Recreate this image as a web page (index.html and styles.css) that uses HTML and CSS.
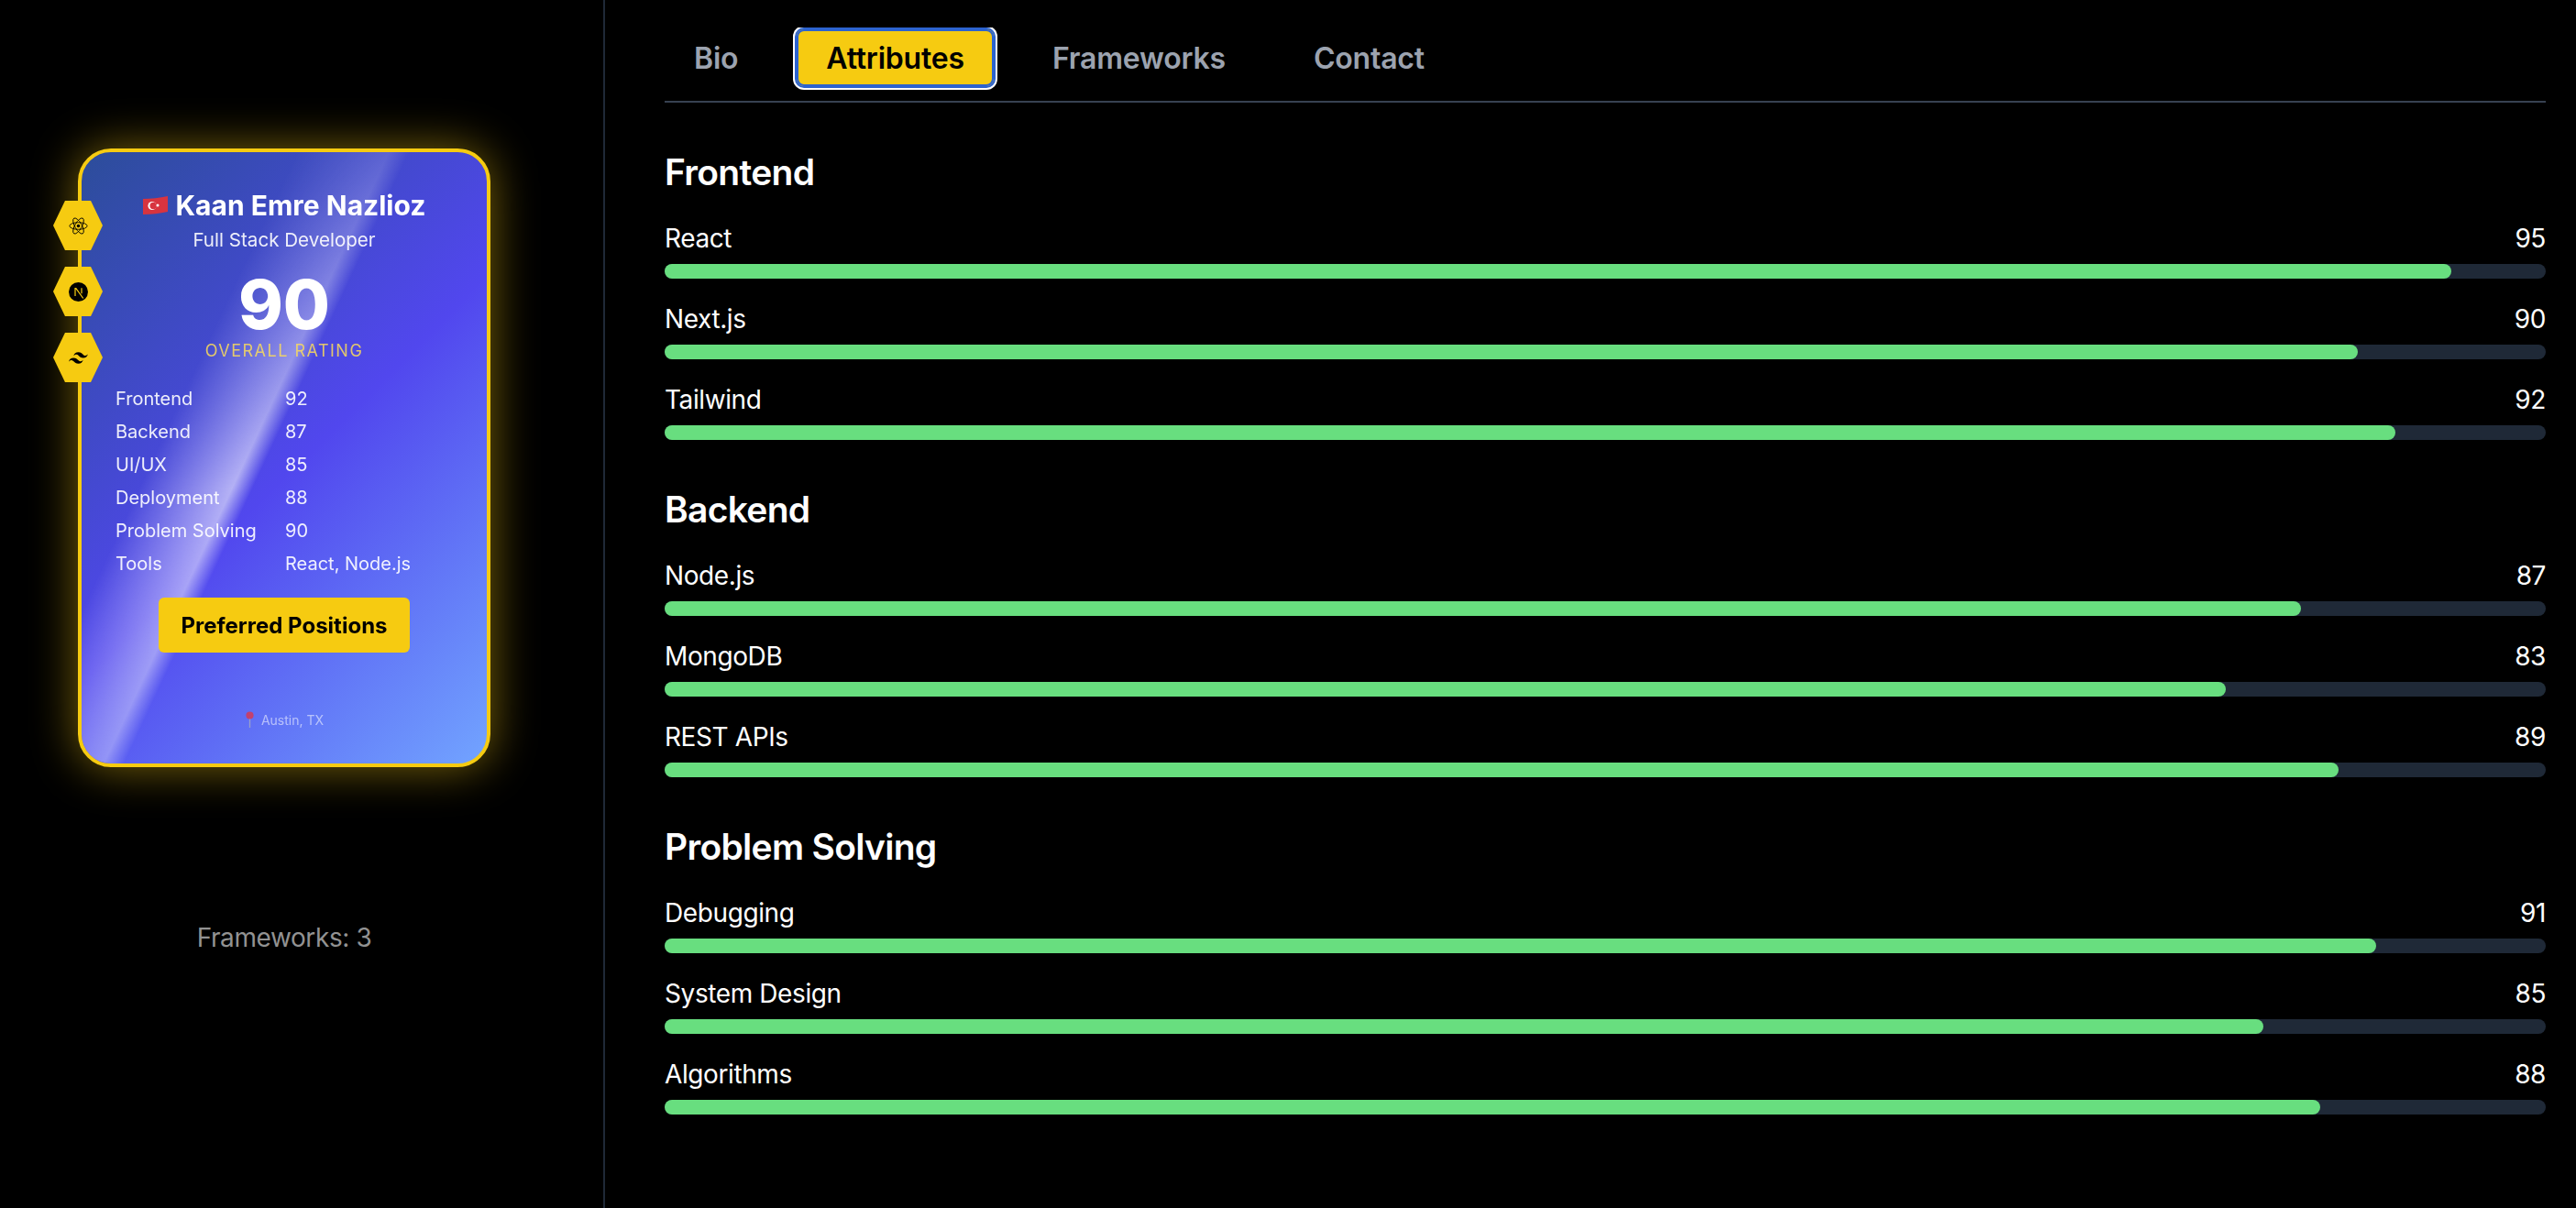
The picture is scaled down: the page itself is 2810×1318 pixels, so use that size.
FILE: index.html
```html
<!DOCTYPE html>
<html lang="en">
<head>
    <meta charset="UTF-8">
    <title>Kaan Emre Nazlioz</title>
    <link rel="stylesheet" href="styles.css">
</head>
<body>
    <div class="layout">
        <aside class="side">
            <div class="card">
                <div class="sheen"></div>
                <div class="badges">
                    <div class="hex">
                        <svg class="hex-icon" viewBox="-12 -12 24 24" fill="none" stroke="#000" stroke-width="1">
                            <circle r="2" fill="#000" stroke="none"></circle>
                            <ellipse rx="11" ry="4.3"></ellipse>
                            <ellipse rx="11" ry="4.3" transform="rotate(60)"></ellipse>
                            <ellipse rx="11" ry="4.3" transform="rotate(120)"></ellipse>
                        </svg>
                    </div>
                    <div class="hex">
                        <svg class="hex-icon" viewBox="0 0 24 24">
                            <circle cx="12" cy="12" r="12" fill="#000"></circle>
                            <path d="M8 17V7.5h1L18 20" fill="none" stroke="#f6cb11" stroke-width="1.4"></path>
                            <path d="M16 7v7" fill="none" stroke="#f6cb11" stroke-width="1.4"></path>
                        </svg>
                    </div>
                    <div class="hex">
                        <svg class="hex-icon" viewBox="0 0 24 24">
                            <path d="M12.001 4.8c-3.2 0-5.2 1.6-6 4.8 1.2-1.6 2.6-2.2 4.2-1.8.913.228 1.565.89 2.288 1.624C13.666 10.618 15.027 12 18.001 12c3.2 0 5.2-1.6 6-4.8-1.2 1.6-2.6 2.2-4.2 1.8-.913-.228-1.565-.89-2.288-1.624C16.337 6.182 14.976 4.8 12.001 4.8zm-6 7.2c-3.2 0-5.2 1.6-6 4.8 1.2-1.6 2.6-2.2 4.2-1.8.913.228 1.565.89 2.288 1.624 1.177 1.194 2.538 2.576 5.512 2.576 3.2 0 5.2-1.6 6-4.8-1.2 1.6-2.6 2.2-4.2 1.8-.913-.228-1.565-.89-2.288-1.624C10.337 13.382 8.976 12 6.001 12z"></path>
                        </svg>
                    </div>
                </div>
                <div class="card-body">
                    <div class="name">
                        <svg class="flag" viewBox="0 0 27 20">
                            <path d="M0 3C9 3 18 2 27 0v17c-9 2-18 3-27 3z" fill="#d8343f"></path>
                            <circle cx="10" cy="10.5" r="4.6" fill="#fff"></circle>
                            <circle cx="11.2" cy="10.5" r="3.7" fill="#d8343f"></circle>
                            <circle cx="16" cy="10" r="1.5" fill="#fff"></circle>
                        </svg>
                        <span>Kaan Emre Nazlioz</span>
                    </div>
                    <div class="role">Full Stack Developer</div>
                    <div class="rating">90</div>
                    <div class="rating-label">OVERALL RATING</div>
                    <div class="stats">
                        <span>Frontend</span><span>92</span>
                        <span>Backend</span><span>87</span>
                        <span>UI/UX</span><span>85</span>
                        <span>Deployment</span><span>88</span>
                        <span>Problem Solving</span><span>90</span>
                        <span>Tools</span><span>React, Node.js</span>
                    </div>
                    <button class="positions">Preferred Positions</button>
                    <div class="location">
                        <svg class="pin" viewBox="0 0 12 22">
                            <path d="M6 10v12" stroke="#9aa0c8" stroke-width="1.6"></path>
                            <circle cx="6" cy="5.5" r="5" fill="#c2416f"></circle>
                        </svg>
                        <span>Austin, TX</span>
                    </div>
                </div>
            </div>
            <div class="framework-count">Frameworks: 3</div>
        </aside>

        <main class="content">
            <nav class="tabs">
                <button class="tab">Bio</button>
                <button class="tab tab-active">Attributes</button>
                <button class="tab">Frameworks</button>
                <button class="tab">Contact</button>
            </nav>

            <section class="group">
                <h2>Frontend</h2>
                <div class="skill">
                    <div class="skill-row"><span>React</span><span>95</span></div>
                    <div class="track"><div class="fill" style="width: 95%"></div></div>
                </div>
                <div class="skill">
                    <div class="skill-row"><span>Next.js</span><span>90</span></div>
                    <div class="track"><div class="fill" style="width: 90%"></div></div>
                </div>
                <div class="skill">
                    <div class="skill-row"><span>Tailwind</span><span>92</span></div>
                    <div class="track"><div class="fill" style="width: 92%"></div></div>
                </div>
            </section>

            <section class="group">
                <h2>Backend</h2>
                <div class="skill">
                    <div class="skill-row"><span>Node.js</span><span>87</span></div>
                    <div class="track"><div class="fill" style="width: 87%"></div></div>
                </div>
                <div class="skill">
                    <div class="skill-row"><span>MongoDB</span><span>83</span></div>
                    <div class="track"><div class="fill" style="width: 83%"></div></div>
                </div>
                <div class="skill">
                    <div class="skill-row"><span>REST APIs</span><span>89</span></div>
                    <div class="track"><div class="fill" style="width: 89%"></div></div>
                </div>
            </section>

            <section class="group">
                <h2>Problem Solving</h2>
                <div class="skill">
                    <div class="skill-row"><span>Debugging</span><span>91</span></div>
                    <div class="track"><div class="fill" style="width: 91%"></div></div>
                </div>
                <div class="skill">
                    <div class="skill-row"><span>System Design</span><span>85</span></div>
                    <div class="track"><div class="fill" style="width: 85%"></div></div>
                </div>
                <div class="skill">
                    <div class="skill-row"><span>Algorithms</span><span>88</span></div>
                    <div class="track"><div class="fill" style="width: 88%"></div></div>
                </div>
            </section>
        </main>
    </div>
</body>
</html>
```

FILE: styles.css
```css
* {
    box-sizing: border-box;
}
body {
    margin: 0;
    background-color: #000;
    color: #fff;
    font-family: Inter, "Liberation Sans", sans-serif;
}
.layout {
    display: flex;
    height: 100vh;
    overflow: hidden;
}

/* left column */
.side {
    width: 660px;
    flex-shrink: 0;
    border-right: 2px solid #1f2937;
    padding: 162px 38px 0 0;
    display: flex;
    flex-direction: column;
    align-items: center;
}
.card {
    position: relative;
    width: 450px;
    height: 675px;
    border: 4px solid #f6cb11;
    border-radius: 36px;
    background: linear-gradient(135deg, #2c4d9a 0%, #5147ee 52%, #72a4ff 100%);
    box-shadow: 0 0 50px rgba(250, 204, 21, 0.5);
}
.sheen {
    position: absolute;
    inset: 0;
    border-radius: 32px;
    background: linear-gradient(115deg, transparent 31%, rgba(255, 255, 255, 0.58) 44.5%, transparent 47.5%);
    -webkit-mask-image: linear-gradient(to bottom, rgba(0, 0, 0, 0.25) 0%, #000 55%, rgba(0, 0, 0, 0.6) 100%);
    mask-image: linear-gradient(to bottom, rgba(0, 0, 0, 0.25) 0%, #000 55%, rgba(0, 0, 0, 0.6) 100%);
}
.badges {
    position: absolute;
    left: -31px;
    top: 53px;
    display: flex;
    flex-direction: column;
    gap: 18px;
    filter: blur(0.3px);
}
.hex {
    width: 54px;
    height: 54px;
    background-color: #f6cb11;
    clip-path: polygon(24% 0, 76% 0, 100% 50%, 76% 100%, 24% 100%, 0 50%);
    display: flex;
    align-items: center;
    justify-content: center;
}
.hex-icon {
    width: 21px;
    height: 21px;
}
.card-body {
    position: relative;
    height: 100%;
    display: flex;
    flex-direction: column;
    align-items: center;
    padding-top: 38px;
    filter: blur(0.4px);
}
.name {
    display: flex;
    align-items: center;
    gap: 9px;
    font-size: 30px;
    font-weight: 700;
    line-height: 40px;
}
.flag {
    width: 27px;
    height: 20px;
}
.role {
    margin-top: 3px;
    font-size: 20.6px;
    line-height: 30px;
    color: rgba(255, 255, 255, 0.9);
}
.rating {
    margin-top: 18px;
    font-size: 74px;
    font-weight: 800;
    line-height: 74px;
}
.rating-label {
    margin-top: 2px;
    font-size: 18px;
    line-height: 24px;
    letter-spacing: 1.5px;
    color: rgba(250, 220, 90, 0.85);
}
.stats {
    align-self: flex-start;
    margin: 22px 0 0 37px;
    display: grid;
    grid-template-columns: 185px auto;
    grid-auto-rows: 36px;
    align-items: center;
    font-size: 20px;
    color: rgba(255, 255, 255, 0.9);
}
.positions {
    margin-top: 19px;
    width: 274px;
    height: 60px;
    border: none;
    border-radius: 6px;
    background-color: #f6cb11;
    color: #000;
    font-family: inherit;
    font-size: 24px;
    font-weight: 700;
}
.location {
    margin-top: 64px;
    display: flex;
    align-items: center;
    gap: 7px;
    font-size: 14px;
    color: rgba(255, 255, 255, 0.55);
}
.pin {
    width: 11px;
    height: 18px;
}
.framework-count {
    margin-top: 166px;
    font-size: 28px;
    line-height: 40px;
    letter-spacing: -0.4px;
    color: #929292;
}

/* right column */
.content {
    flex: 1;
    padding: 0 33px 0 65px;
}
.tabs {
    display: flex;
    gap: 32px;
    height: 82px;
    margin-top: 30px;
    padding-top: 2px;
    border-bottom: 2px solid #374151;
    overflow: hidden;
}
.tab {
    height: 62px;
    padding: 0 32px;
    border: none;
    border-radius: 8px;
    background: none;
    color: #9ca3af;
    font-family: inherit;
    font-size: 32px;
    font-weight: 600;
    letter-spacing: -0.2px;
}
.tab-active {
    background-color: #f6cb11;
    color: #000;
    box-shadow: inset 0 0 0 2px #2c63cf, 0 0 0 2px #2c63cf, 0 0 0 4px #fff;
}
.group {
    margin-top: 48px;
}
h2 {
    margin: 0;
    font-size: 39px;
    font-weight: 600;
    line-height: 56px;
    letter-spacing: -0.7px;
}
.skill {
    margin-top: 24px;
}
.skill-row {
    display: flex;
    justify-content: space-between;
    font-size: 28px;
    line-height: 40px;
    letter-spacing: -0.4px;
    margin-bottom: 8px;
}
.track {
    height: 16px;
    border-radius: 8px;
    background-color: #1f2937;
}
.fill {
    height: 100%;
    border-radius: 8px;
    background-color: #68de7f;
}
```
